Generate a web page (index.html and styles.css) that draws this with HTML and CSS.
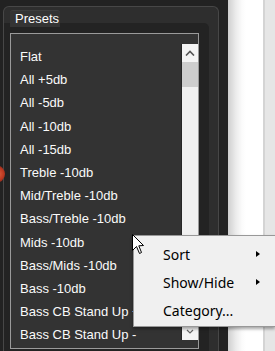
FILE: index.html
```html
<!DOCTYPE html>
<html>
<head>
<meta charset="utf-8">
<link rel="stylesheet" href="styles.css">
</head>
<body>
<div class="left">
  <div class="knob"></div>
  <div class="panel">
    <div class="tab">Presets</div>
    <div class="group">
      <div class="list">
        <div class="items">
          <div class="item">Flat</div>
          <div class="item">All +5db</div>
          <div class="item">All -5db</div>
          <div class="item">All -10db</div>
          <div class="item">All -15db</div>
          <div class="item">Treble -10db</div>
          <div class="item">Mid/Treble -10db</div>
          <div class="item">Bass/Treble -10db</div>
          <div class="item">Mids -10db</div>
          <div class="item">Bass/Mids -10db</div>
          <div class="item">Bass -10db</div>
          <div class="item">Bass CB Stand Up +</div>
          <div class="item">Bass CB Stand Up -</div>
        </div>
        <div class="scrollbar">
          <div class="sb-btn"><svg width="10" height="6" viewBox="0 0 10 6"><polyline points="1,5.5 5,1.5 9,5.5" fill="none" stroke="#555" stroke-width="1.6"/></svg></div>
          <div class="sb-thumb"></div>
          <div class="sb-track"></div>
          <div class="sb-btn"><svg width="8" height="5" viewBox="0 0 8 5"><polyline points="1,1 4,4 7,1" fill="none" stroke="#666" stroke-width="1.2"/></svg></div>
        </div>
      </div>
    </div>
  </div>
</div>
<div class="right"></div>

<div class="menu">
  <div class="menu-item"><span class="label">Sort</span><span class="arrow"></span></div>
  <div class="menu-item"><span class="label">Show/Hide</span><span class="arrow"></span></div>
  <div class="menu-item"><span class="label">Category...</span></div>
</div>

<svg class="cursor" width="13" height="21" viewBox="0 0 13 21">
  <path d="M0.5,0.5 L0.5,16.5 L4.5,12.5 L7.5,19.5 L9.5,18.5 L6.8,11.8 L11.5,11.5 Z" fill="#fff" stroke="#000" stroke-width="1" stroke-linejoin="miter"/>
</svg>
</body>
</html>
```

FILE: styles.css
```css
html, body {
  margin: 0;
  padding: 0;
}
body {
  width: 275px;
  height: 351px;
  overflow: hidden;
  display: flex;
  background: #222;
  position: relative;
  font-family: "Liberation Sans", Arial, sans-serif;
}
.left {
  width: 228px;
  flex: none;
  box-sizing: border-box;
  padding: 6px 9px 0 3px;
  position: relative;
  display: flex;
  flex-direction: column;
}
.knob {
  position: absolute;
  left: -13px;
  top: 165px;
  width: 18px;
  height: 18px;
  border-radius: 50%;
  background: radial-gradient(circle at 60% 50%, #e0603e 0, #b8361f 45%, #7a2a1f 62%, #9a9a9a 70%, #5a5a5a 100%);
}
.panel {
  flex: 1;
  background: #2e2e2e;
  border: 1px solid #474747;
  border-bottom: none;
  border-radius: 6px 6px 0 0;
  padding-top: 3px;
  display: flex;
  flex-direction: column;
}
.tab {
  margin-left: 6px;
  width: 50px;
  height: 17px;
  box-sizing: border-box;
  background: #343434;
  border-top: 1px solid #3e3e3e;
  border-radius: 3px 3px 0 0;
  color: #fff;
  font-family: "Liberation Sans", Arial, sans-serif;
  font-size: 13px;
  line-height: 16px;
  padding-left: 5px;
  margin-bottom: -4px;
  position: relative;
  z-index: 1;
}
.group {
  width: 205px;
  flex: 1;
  background: #232323;
  border-radius: 0 5px 0 0;
  padding: 10px 0 0 6px;
  box-sizing: border-box;
}
.list {
  width: 189px;
  height: 316px;
  box-sizing: border-box;
  border: 1px solid #9a9a9a;
  background: #333;
  display: flex;
}
.items {
  flex: 1;
  padding: 11px 0 0 9px;
  overflow: hidden;
}
.item {
  height: 23.2px;
  line-height: 23.2px;
  font-size: 13px;
  color: #fafafa;
  white-space: nowrap;
}
.scrollbar {
  width: 16px;
  border-left: 1px solid #262626;
  margin: 10px 0 8px 0;
  display: flex;
  flex-direction: column;
  background: #f0f0f0;
}
.sb-btn {
  height: 18px;
  display: flex;
  align-items: center;
  justify-content: center;
  background: #f4f4f4;
}
.sb-thumb {
  height: 25px;
  background: #cdcdcd;
}
.sb-track {
  flex: 1;
}
.right {
  flex: 1;
  background: linear-gradient(to right, #cfcfcf 0, #ececec 8px, #fbfbfb 14px, #fff 18px, #fff 35px, #d4d4d4 35px, #d4d4d4 37px, #e6e6e6 37px);
}
.menu {
  position: absolute;
  left: 133px;
  top: 235px;
  width: 142px;
  height: 92px;
  box-sizing: border-box;
  background: #f0f0f0;
  border: 1px solid #989898;
  border-right: none;
  box-shadow: 0 2px 3px rgba(0, 0, 0, 0.35);
  padding-top: 4px;
  font-family: "Noto Sans", "Open Sans", sans-serif;
  font-size: 14px;
  color: #000;
}
.menu-item {
  height: 28px;
  display: flex;
  align-items: center;
  padding-left: 29px;
}
.label {
  width: 93px;
  flex: none;
}
.arrow {
  width: 0;
  height: 0;
  border-top: 3.5px solid transparent;
  border-bottom: 3.5px solid transparent;
  border-left: 4px solid #000;
}
.cursor {
  position: absolute;
  left: 132px;
  top: 234px;
}
```
